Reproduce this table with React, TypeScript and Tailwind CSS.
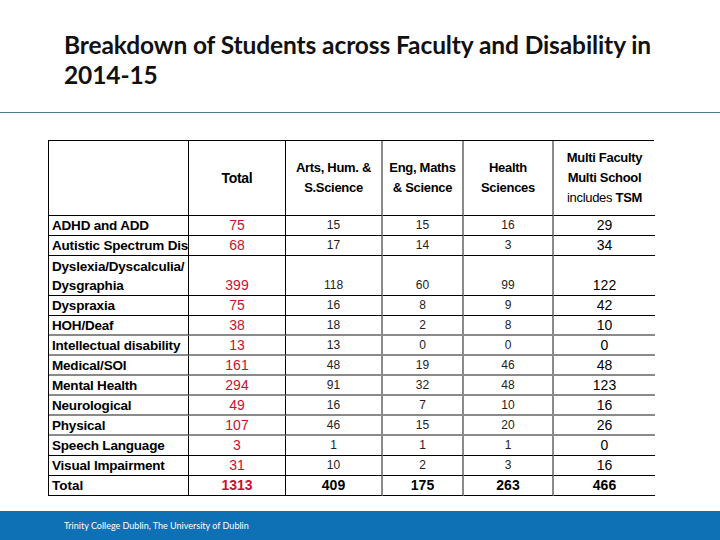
const rows = [
  { label: "ADHD and ADD", v: ["75", "15", "15", "16", "29"], line: "black" },
  { label: "Autistic Spectrum Disorder", v: ["68", "17", "14", "3", "34"], line: "black" },
  { label: "Dyslexia/Dyscalculia/ Dysgraphia", v: ["399", "118", "60", "99", "122"], line: "black", tall: true },
  { label: "Dyspraxia", v: ["75", "16", "8", "9", "42"], line: "black" },
  { label: "HOH/Deaf", v: ["38", "18", "2", "8", "10"], line: "gray" },
  { label: "Intellectual disability", v: ["13", "13", "0", "0", "0"], line: "gray" },
  { label: "Medical/SOI", v: ["161", "48", "19", "46", "48"], line: "gray" },
  { label: "Mental Health", v: ["294", "91", "32", "48", "123"], line: "gray" },
  { label: "Neurological", v: ["49", "16", "7", "10", "16"], line: "gray" },
  { label: "Physical", v: ["107", "46", "15", "20", "26"], line: "gray" },
  { label: "Speech Language", v: ["3", "1", "1", "1", "0"], line: "black" },
  { label: "Visual Impairment", v: ["31", "10", "2", "3", "16"], line: "black" },
];

const colLines = ["border-r border-black", "border-r border-black", "border-r-2 border-[#8a8a8a]", "border-r-2 border-[#8a8a8a]", "border-r-2 border-[#8a8a8a]", ""];

function Cell({ i, bottom, children, className = "" }: { i: number; bottom: string; children?: React.ReactNode; className?: string }) {
  const right = colLines[i];
  const b = bottom === "gray" ? "border-b-2 border-b-[#8a8a8a]" : "border-b border-b-black";
  return (
    <div className={`${right} ${b} flex overflow-hidden ${className}`}>
      <div>{children}</div>
    </div>
  );
}

export default function App() {
  return (
    <div className="w-[720px] h-[540px] bg-white flex flex-col" style={{ fontFamily: "Arial, 'Liberation Sans', sans-serif" }}>
      <div className="h-[112px] pl-[64px] pt-[30px]">
        <h1 className="font-['Lato',sans-serif] font-bold text-[24.5px] leading-[30px] text-[#111] tracking-[-0.1px]">
          Breakdown of Students across Faculty and Disability in
          <br />
          2014-15
        </h1>
      </div>
      <div className="h-px bg-[#4d7d8f]" />

      <div className="ml-[48px] mt-[27px] w-[606px] border-t border-l border-black grid grid-cols-[140px_97px_97px_81px_90px_101px] font-['Liberation_Sans',Arial,sans-serif] text-[13px] text-black">
        {/* header */}
        <Cell i={0} bottom="black" className="h-[75px]" />
        <Cell i={1} bottom="black" className="h-[75px] items-center justify-center font-bold text-[14px] tracking-[-0.3px]">Total</Cell>
        <Cell i={2} bottom="black" className="h-[75px] items-center justify-center text-center font-bold leading-[20px] tracking-[-0.3px]">
          Arts, Hum. &amp;<br />S.Science
        </Cell>
        <Cell i={3} bottom="black" className="h-[75px] items-center justify-center text-center font-bold leading-[20px] tracking-[-0.3px]">
          Eng, Maths<br />&amp; Science
        </Cell>
        <Cell i={4} bottom="black" className="h-[75px] items-center justify-center text-center font-bold leading-[20px] tracking-[-0.3px]">
          Health<br />Sciences
        </Cell>
        <Cell i={5} bottom="black" className="h-[75px] items-center justify-center text-center font-bold leading-[20px] tracking-[-0.3px]">
          Multi Faculty<br />Multi School<br /><span className="font-normal">includes</span> TSM
        </Cell>

        {rows.map((r) => {
          const h = r.tall ? "h-[40px] items-end" : "h-[20px] items-center";
          return (
            <div key={r.label} className="contents">
              <Cell i={0} bottom={r.line} className={`${h} pl-[3px]`}>
                <span className={`block font-bold text-[13.5px] tracking-[-0.2px] leading-[19px] ${r.tall ? "w-[134px]" : "whitespace-nowrap"}`}>{r.label}</span>
              </Cell>
              {r.v.map((n, j) => (
                <Cell key={j} i={j + 1} bottom={r.line} className={`${h} justify-center leading-[19px] ${j === 0 ? "text-[#c8102e] text-[14px]" : j === 4 ? "text-[14px]" : "text-[12px] text-[#222]"}`}>
                  {n}
                </Cell>
              ))}
            </div>
          );
        })}

        <Cell i={0} bottom="black" className="h-[20px] items-center pl-[3px]">
          <span className="font-bold text-[13.5px] leading-[19px]">Total</span>
        </Cell>
        {["1313", "409", "175", "263", "466"].map((n, j) => (
          <Cell key={n} i={j + 1} bottom="black" className={`h-[20px] items-center justify-center font-bold leading-[19px] text-[14px] ${j === 0 ? "text-[#c8102e]" : ""}`}>
            {n}
          </Cell>
        ))}
      </div>

      <div className="mt-auto h-[29px] bg-[#0f71b5] flex items-center pl-[64px]">
        <span className="font-['Lato',sans-serif] text-[9px] text-white">Trinity College Dublin, The University of Dublin</span>
      </div>
    </div>
  );
}
